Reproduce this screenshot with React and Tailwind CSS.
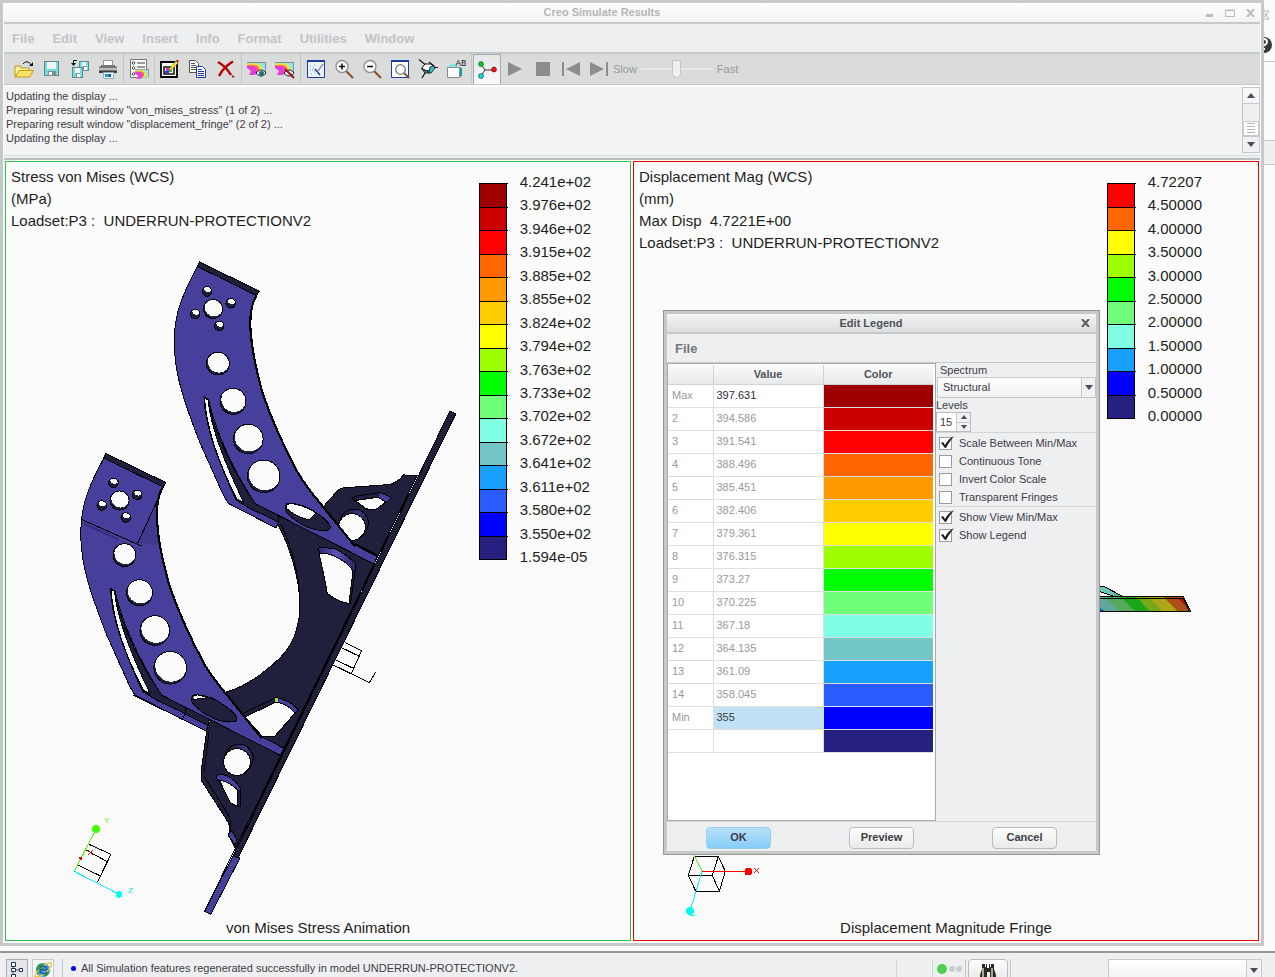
import { useState } from "react";

const STRESS_COLORS = [
  "#9f0000", "#cc0000", "#ff0000", "#ff6600", "#ff9900", "#ffcc00", "#ffff00", "#9fff00",
  "#00ff00", "#70ff78", "#80ffe5", "#73c6c6", "#18a0ff", "#2b5cff", "#0000ff", "#262080",
];

const STRESS_LABELS = [
  "4.241e+02", "3.976e+02", "3.946e+02", "3.915e+02", "3.885e+02", "3.855e+02",
  "3.824e+02", "3.794e+02", "3.763e+02", "3.733e+02", "3.702e+02", "3.672e+02",
  "3.641e+02", "3.611e+02", "3.580e+02", "3.550e+02", "1.594e-05",
];

const DISP_COLORS = [
  "#ff0000", "#ff6600", "#ffff00", "#9fff00", "#00ff00",
  "#70ff78", "#80ffe5", "#18a0ff", "#0000ff", "#262080",
];

const DISP_LABELS = [
  "4.72207", "4.50000", "4.00000", "3.50000", "3.00000", "2.50000",
  "2.00000", "1.50000", "1.00000", "0.50000", "0.00000",
];

const LEVEL_ROWS = [
  ["Max", "397.631"], ["2", "394.586"], ["3", "391.541"], ["4", "388.496"],
  ["5", "385.451"], ["6", "382.406"], ["7", "379.361"], ["8", "376.315"],
  ["9", "373.27"], ["10", "370.225"], ["11", "367.18"], ["12", "364.135"],
  ["13", "361.09"], ["14", "358.045"], ["Min", "355"], ["", ""],
];

const MENUS = ["File", "Edit", "View", "Insert", "Info", "Format", "Utilities", "Window"];

const MESSAGES = [
  "Updating the display ...",
  'Preparing result window "von_mises_stress" (1 of 2) ...',
  'Preparing result window "displacement_fringe" (2 of 2) ...',
  "Updating the display ...",
];

function Icon({ children }) {
  return (
    <svg width="20" height="20" viewBox="0 0 20 20" fill="none" aria-hidden="true">
      {children}
    </svg>
  );
}

function Floppy({ x, y, s }) {
  return (
    <g transform={`translate(${x} ${y})`} shapeRendering="crispEdges">
      <rect width={s} height={s} fill="#5a8a8c" />
      <rect x="1" y="1" width={s - 2} height={s - 2} fill="#6fdfe2" />
      <rect x="3" y="1" width={s - 6} height={s / 2 - 1} fill="#f4f6f6" />
      <rect x="4" y={s - 5} width={s - 7} height="5" fill="#8a8a8a" />
      <rect x="5" y={s - 4} width="3" height="3" fill="#fff" />
    </g>
  );
}

function Rainbow({ x = 0, y = 0 }) {
  return (
    <g transform={`translate(${x} ${y})`}>
      <path d="M0 0h19v10h-4v3H5l3-4-8-4z" fill="#8fe4ff" />
      <path d="M0 1h8c6 0 9 4 8 9l-3 2H5l3-3-8-5z" fill="#b4f07a" />
      <path d="M0 2h8c5 0 7 3 6 7l-2 3H5l3-3-8-5z" fill="#ffe23c" />
      <path d="M0 3h7c4 0 6 2 5 6l-2 3H5l3-3-8-4z" fill="#ff7a50" />
      <path d="M0 4h6c4 1 5 3 4 5l-2 4H2l2-4-4-3z" fill="#e83cd8" />
      <path d="M0 .500h18.500v9.500" stroke="#8a8a8a" shapeRendering="crispEdges" />
    </g>
  );
}

function Magnifier({ children }) {
  return (
    <g>
      <path d="M12 12l7 7" stroke="#8a4a24" strokeWidth="2" />
      <circle cx="8" cy="7.500" r="6" fill="#fff" stroke="#8d8d8d" strokeWidth="1.300" />
      {children}
    </g>
  );
}

const ICONS = {
  Open: (
    <>
      <path d="M1 7h5l1 2h8v4H5l-3 5H1z" fill="#fff3a0" stroke="#b8930c" />
      <path d="M5 11.500h14.500l-4 6.500H1.500z" fill="#fce468" stroke="#c49a12" />
      <path d="M9 5c2-3 6-3 8 1" stroke="#111" />
      <path d="M19 3v4h-4z" fill="#111" />
    </>
  ),
  Save: <Floppy x={2} y={2} s={15} />,
  "Save As": (
    <>
      <Floppy x={9} y={2} s={10} />
      <Floppy x={2} y={8} s={11} />
      <path d="M7 1.500H3.500V5" stroke="#111" />
      <path d="M1 4h5L3.500 7z" fill="#111" />
    </>
  ),
  Print: (
    <g shapeRendering="crispEdges">
      <path d="M5 1h9v7H5z" fill="#fff" stroke="#999" />
      <path d="M1 8l3-2h12l3 2v6H1z" fill="#777" />
      <path d="M1 9h18v2H1z" fill="#b9b9b9" />
      <path d="M1 12h18v2H1z" fill="#3c3c3c" />
      <path d="M5 13h10v6H6z" fill="#fff" stroke="#8ac" />
      <path d="M7 15h4v3H7z" fill="#18a0b8" />
      <path d="M11 15h2v3h-2z" fill="#1e3cc8" />
    </g>
  ),
  Legend: (
    <>
      <path d="M1.500.500h16v18h-16z" fill="#fff" stroke="#777" />
      <path d="M8 4h8M8 8h8M8 12h3" stroke="#333" />
      <circle cx="4.500" cy="4" r="1.300" stroke="#444" />
      <circle cx="4.500" cy="9" r="1.300" stroke="#444" />
      <circle cx="4.500" cy="15" r="1.300" stroke="#444" />
      <g transform="translate(6 10) scale(.75)">
        <Rainbow />
      </g>
    </>
  ),
  Edit: (
    <>
      <path d="M1 3h16v15H1z" fill="#fff" stroke="#000" strokeWidth="1.800" />
      <path d="M4 8h10v7H4z" stroke="#111" strokeWidth="1.500" />
      <path d="M6 9h3v3H6z" fill="#e81ee8" />
      <path d="M9 9h3v4H9z" fill="#24c224" />
      <path d="M5 12h4v2H5z" fill="#183cf0" />
      <path d="M9 10l7-8 2 2-7 7z" fill="#ffe83c" stroke="#8a7a00" strokeWidth=".7" />
      <path d="M16 1.500l1.500-1L19 2l-1 1.500z" fill="#e02020" />
    </>
  ),
  Copy: (
    <>
      <path d="M1.500 1.500h6l3 3v9h-9z" fill="#fff" stroke="#555" />
      <path d="M3 4.500h4M3 6.500h5M3 8.500h5M3 10.500h5" stroke="#555" />
      <path d="M8.500 7.500h6l3 3v8h-9z" fill="#fff" stroke="#1c3c9c" />
      <path d="M10 10.500h4M10 12.500h6M10 14.500h6M10 16.500h6" stroke="#1c3c9c" />
    </>
  ),
  Delete: (
    <>
      <path d="M2 3c5 3 10 8 13 13M17 2.500C11 6 6 11 3 17" stroke="#b40000" strokeWidth="2.400" />
      <path d="M16 17l2 1" stroke="#b40000" strokeWidth="1.500" />
    </>
  ),
  "Show Result": (
    <>
      <Rainbow y={3} />
      <path d="M9 14c3-4 7-4 10 0-3 4-7 4-10 0z" fill="#dfe8e8" stroke="#222" />
      <circle cx="14.500" cy="14.500" r="2.500" fill="#1e7474" />
    </>
  ),
  "Hide Result": (
    <>
      <Rainbow y={3} />
      <path d="M9 14c3-4 7-4 10 0-3 4-7 4-10 0z" fill="#dfe8e8" stroke="#222" />
      <path d="M10 10l9 9" stroke="#a01010" strokeWidth="2" />
    </>
  ),
  Repaint: (
    <>
      <path d="M1.500 1.500h17v17h-17z" fill="#e8f3fb" stroke="#1c3ca0" />
      <path d="M1 1h18v2H1z" fill="#1c3ca0" />
      <path d="M4 7h1M7 9h1M4 11h1M8 13h1M5 15h1M8 6h1M6 11h1" stroke="#58a0d8" />
      <path d="M9 10l5 6" stroke="#1c3c80" strokeWidth="1.400" />
      <path d="M12 12l5-7" stroke="#777" strokeWidth="1.200" />
    </>
  ),
  "Zoom In": (
    <Magnifier>
      <path d="M5 7.500h6M8 4.500v6" stroke="#111" strokeWidth="1.600" />
    </Magnifier>
  ),
  "Zoom Out": (
    <Magnifier>
      <path d="M5 7.500h6" stroke="#111" strokeWidth="1.600" />
    </Magnifier>
  ),
  Refit: (
    <>
      <path d="M1.500 1.500h17v17h-17z" fill="#fff" stroke="#1c3ca0" />
      <path d="M1 1h18v2H1z" fill="#1c3ca0" />
      <path d="M14 14l5 5" stroke="#8a4a24" strokeWidth="2" />
      <circle cx="10.500" cy="10.500" r="4.800" fill="#fff" stroke="#777" strokeWidth="1.300" />
    </>
  ),
  Orient: (
    <>
      <path d="M3.500 9.500L7 5h6l3 3-3 3-4 1z" fill="#fff" stroke="#111" />
      <path d="M3.500 9.500L9 12l3 2H7z" fill="#3c8484" stroke="#111" strokeWidth=".8" />
      <path d="M12 8l4-1.500L17 9l-4 5h-2z" fill="#2ec8d0" stroke="#111" strokeWidth=".8" />
      <path d="M1 .500l6 5M16 8.500h4M7 14l-3 5M11 3l5 4" stroke="#111" strokeWidth="1.200" />
    </>
  ),
  "Saved Views": (
    <>
      <path d="M2 8l3-3h6v3z" fill="#7fe8ec" />
      <path d="M13 8l3 1v8l-2 1h-1z" fill="#12a0a4" />
      <path d="M1.500 8.500h12v10h-12z" fill="#fff" stroke="#8a8a8a" />
      <text x="9.500" y="7" fill="#222" className="font-['Liberation_Mono',monospace] text-[9px]">AB</text>
    </>
  ),
  "Spin Center": (
    <>
      <path d="M4 4l4 6-4 6M8 10h8" stroke="#333" />
      <circle cx="4" cy="4" r="2.500" fill="#12c812" stroke="#064" strokeWidth=".6" />
      <circle cx="4" cy="16" r="2.500" fill="#18d8e0" stroke="#044" strokeWidth=".6" />
      <circle cx="17" cy="9.500" r="2.500" fill="#f01414" stroke="#600" strokeWidth=".6" />
    </>
  ),
  Play: <path d="M3 3l14 7-14 7z" fill="#8d8d8d" />,
  Stop: <path d="M3 3h14v14H3z" fill="#8d8d8d" />,
  "Step Back": <path d="M1 3h2v14H1zM19 3v14L5 10z" fill="#8d8d8d" />,
  "Step Forward": <path d="M17 3h2v14h-2zM1 3v14l14-7z" fill="#8d8d8d" />,
};

const TOOL_GROUPS = [
  ["Open", "Save", "Save As", "Print"],
  ["Legend"],
  ["Edit", "Copy", "Delete"],
  ["Show Result", "Hide Result"],
  ["Repaint", "Zoom In", "Zoom Out", "Refit", "Orient", "Saved Views"],
  ["Spin Center", "Play", "Stop", "Step Back", "Step Forward"],
];

function Toolbar() {
  return (
    <div className="flex h-[33px] items-stretch border-t-2 border-b border-[#c5c9cb] bg-[#dadcdb] pl-1.5">
      {TOOL_GROUPS.map((group, i) => (
        <div key={i} className="flex">
          {i > 0 && <span className="mx-px w-px bg-[#c3c6c8]" />}
          {group.map((name) => (
            <button
              key={name}
              title={name}
              className={
                name === "Spin Center"
                  ? "flex w-7 items-center justify-center border-x border-t border-[#a9acae] bg-gradient-to-b from-[#e4e5e7] to-[#fbfbfb]"
                  : "flex w-7 items-center justify-center"
              }
            >
              <Icon>{ICONS[name]}</Icon>
            </button>
          ))}
        </div>
      ))}
      <label className="flex items-center gap-1 text-[11px] text-[#97999b]">
        Slow
        <input
          type="range"
          defaultValue="49"
          disabled
          className="h-5 w-[72px] appearance-none bg-[linear-gradient(#e6e8e8,#e6e8e8)] bg-[length:100%_2px] bg-center bg-no-repeat [&::-webkit-slider-thumb]:h-[18px] [&::-webkit-slider-thumb]:w-[9px] [&::-webkit-slider-thumb]:appearance-none [&::-webkit-slider-thumb]:rounded-t-sm [&::-webkit-slider-thumb]:rounded-b-full [&::-webkit-slider-thumb]:border [&::-webkit-slider-thumb]:border-[#c3c6c8] [&::-webkit-slider-thumb]:bg-[#eff0f0]"
        />
        Fast
      </label>
    </div>
  );
}

function MessageLog() {
  return (
    <div className="flex h-[70px] border-t-2 border-[#fdfdfd] bg-[#f3f3f3]">
      <div className="flex-1 py-0.5 pl-0.5 text-[11px] leading-[14px] text-[#3c3c46]">
        {MESSAGES.map((m, i) => (
          <p key={i}>{m}</p>
        ))}
      </div>
      <div className="flex h-[66px] w-[18px] flex-col border border-[#c5c9cb] bg-[#eeeff1]">
        <button aria-label="Scroll up" className="flex h-4 items-center justify-center border-b border-[#c5c9cb] bg-[#f6f6f7]">
          <svg width="8" height="5"><path d="M0 5l4-5 4 5z" fill="#4a4a5a" /></svg>
        </button>
        <div className="flex-1" />
        <div className="flex h-[15px] items-center justify-center border border-[#c5c9cb] bg-white">
          <svg width="8" height="11"><path d="M0 .500h8M0 3.500h8M0 6.500h8M0 9.500h8" stroke="#b4b6b8" /></svg>
        </div>
        <button aria-label="Scroll down" className="flex h-4 items-center justify-center border-t border-[#c5c9cb] bg-[#f0f1f2]">
          <svg width="8" height="5"><path d="M0 0l4 5 4-5z" fill="#4a4a5a" /></svg>
        </button>
      </div>
    </div>
  );
}

function Legend({ colors, labels, barClass, labelClass }) {
  return (
    <div className="flex gap-3">
      <div className={`mt-[9px] flex w-[29px] flex-col ${barClass}`}>
        {colors.map((c) => (
          <div key={c} className="flex-1 border-t border-black">
            <div className="h-full w-7 border-x border-black" style={{ backgroundColor: c }} />
          </div>
        ))}
        <div className="h-px w-7 bg-black" />
      </div>
      <div className={`flex flex-col justify-between text-[15px] leading-4 ${labelClass}`}>
        {labels.map((l) => (
          <span key={l}>{l}</span>
        ))}
      </div>
    </div>
  );
}

// [cx, cy, r] of every round hole in one arm
const ARM_HOLES = [
  [207, 291.5, 4.8], [230.7, 303.3, 4.8], [195.3, 314, 4.8], [219.3, 326, 4.8],
  [213, 309, 9.6], [217.9, 363.6, 11.4], [233, 401.3, 13], [248.3, 439, 14.8], [263.7, 476.3, 16.3],
];

function Arm({ id, slotView, pad }) {
  return (
    <g stroke="#000" strokeWidth="1">
      {pad && (
        <>
          <path d="M226.800 503.500L299.500 539.500L302 533L250 507Z" fill="#46409c" />
          <path d="M250 508.500L301.500 534L303 527L255 503Z" fill="#21203c" />
        </>
      )}
      {/* outer flange */}
      <path
        d="M197.700 266C190 280 180 300 176.700 317C173 335 174 352 176 365C178 380 182 392 185 402C190 417 195 430 200 443L223.300 495L228.500 503.500L276 528.500L278.500 522L251 507L210 400Z"
        fill="#46409c"
        stroke="none"
      />
      <path d="M185 402C190 417 195 430 200 443L223.300 495L228.500 503.500L276 528L278.500 522" fill="none" />
      {/* slot and its thickness */}
      <path d="M204 397L208.500 399.500C211 420 225 460 255 503L279 515L278.500 522L250 508.500L236 500C222 470 206 430 204 397Z" fill="#21203c" />
      <path d="M204.500 398L208 400C211 430 226 466 243.500 502L237 499C222 470 207 432 204.500 398Z" fill="#fcfcfc" />
      {/* face */}
      <path
        d="M197.700 266L256.700 295.300C252 302 251 315 250.700 327C252 345 255 360 263.300 393C272 420 284 446 298 473C307 488 315 497 323.300 507L355 545L377.300 556.700L374 564L255 503.500C236 474 217 436 208.500 399.500L204 397L190 400C170 360 171 320 197.700 266Z"
        fill="#46409c"
        stroke="none"
      />
      <path d="M355 545L377.300 556.700L374 564L255 503.500C236 474 217 436 208.500 399.500L204 397C205 430 222 470 237 500L244 504" fill="none" />
      <path d="M197.700 266C190 280 180 300 176.700 317C173 335 174 352 176 365C178 380 182 392 185 402" fill="none" />
      {/* inner edge */}
      <path
        d="M256.700 295.300C252 302 250 313 250.300 327C251.500 350 256 368 262.500 393C272 421 284 447 298 473C307 488 315 497 323.300 507L355 546.500"
        fill="none"
        strokeWidth="2.200"
      />
      <path d="M199.500 262L259.300 291L256.700 295.600L197.300 266.500Z" fill="#21203c" />
      {pad && (
        <g>
          <path d="M253.500 306L231 351L252 354Q249 330 249.500 316Z" fill="#3a3486" stroke="none" opacity=".55" />
          <path d="M175 328L235 354.500M255 300L231 352" fill="none" />
          <path d="M177 332L212 348" stroke="#332e7c" strokeWidth="2" />
        </g>
      )}
      {ARM_HOLES.map(([cx, cy, r], i) => (
        <g key={i}>
          <clipPath id={`${id}-${i}`}>
            <circle cx={cx} cy={cy} r={r} />
          </clipPath>
          <circle cx={cx} cy={cy} r={r} fill="#21203c" />
          <circle
            cx={cx + 1}
            cy={r < 5 ? cy - 3.5 : cy - 2}
            r={r < 5 ? r - 0.5 : r - 0.4}
            fill="#fcfcfc"
            stroke="none"
            clipPath={`url(#${id}-${i})`}
          />
          <circle cx={cx} cy={cy} r={r} fill="none" />
        </g>
      ))}
      {/* oblong hole near the foot */}
      <path d="M285 508C285 504 287 503 291 503.300C300 504 310 508 317 513.300C324 518 329 522 330 526C331 530 328 530.500 322 530.500C312 530 302 525 295 520C289 515 285 512 285 508Z" fill="#21203c" />
      <path d={slotView} fill="#fcfcfc" />
    </g>
  );
}

function StressModel() {
  return (
    <svg
      className="absolute inset-0 h-full w-full"
      viewBox="6 162 624 778"
      preserveAspectRatio="xMinYMin meet"
      shapeRendering="crispEdges"
      aria-hidden="true"
    >
      <defs>
        <linearGradient id="lit" x1="0" x2="1">
          <stop offset="0" stopColor="#2b2766" />
          <stop offset=".5" stopColor="#5a54b8" />
          <stop offset="1" stopColor="#2b2766" />
        </linearGradient>
        <linearGradient id="bore" x1="0" x2="1">
          <stop offset=".3" stopColor="#21203c" />
          <stop offset=".7" stopColor="#3c3688" />
          <stop offset="1" stopColor="#21203c" />
        </linearGradient>
      </defs>
      <g stroke="#000" strokeWidth="1">
        {/* web between the arms */}
        <path
          d="M276 512L323 507L336.700 491.700Q340 488 345 487.700L390 484.500Q400 481 403.500 474.500L407 476L417 475.500L236 850L228.300 835Q231 828 228 822L201 780V772L207.300 727L226.700 691.700C245 687 262 675 280 658C292 645 296 635 299 618C303 590 292 550 278 525Z"
          fill="#21203c"
        />
        <path d="M281 524C294 552 302 585 299 618M204 772L209 732M204 776L229 816Q232 822 230 832" fill="none" />
        {/* cut-outs */}
        <path d="M351.700 497.700L357 496L380 492.500L390.700 497.500L388 501L375 510L366 509.500Z" fill="#21203c" />
        <path d="M380 493L390.500 497.500L386 502L379 497.500Z" fill="#46409c" stroke="none" />
        <path d="M355 500.500L378 497.300L386 502L375 510L366 508.700Z" fill="#fcfcfc" />
        <circle cx="354" cy="523.300" r="14.300" fill="url(#bore)" />
        <circle cx="352" cy="527" r="13.300" fill="#fcfcfc" />
        <path d="M317.700 549L321 547L335 549Q346 554 355 563V572L350.500 603.500L348 603Z" fill="url(#lit)" />
        <path d="M351 571L355 572L350.500 603.500L348 603Z" fill="#21203c" />
        <path d="M319 553Q330 553 338 558Q348 563 353 571L349 603.300Q340 603 327.300 593.300Q325 580 319 553Z" fill="#fcfcfc" />
        <path d="M242 714L276 697.500Q290 700 298.300 709.300L295 713L246.700 718Z" fill="#21203c" />
        <path d="M276 697.500Q290 700 298 709.500L295 713.500Q288 704 276 702Z" fill="#46409c" />
        <path d="M245 717L276 702Q288 704 295 713L275 736H262Z" fill="#fcfcfc" />
        <path d="M275 698h3v4h-3z" fill="#9be04a" stroke="none" />
        <circle cx="239" cy="758.500" r="14.300" fill="url(#bore)" />
        <circle cx="237" cy="762" r="13.300" fill="#fcfcfc" />
        <path d="M216.700 776Q218 773.500 226.700 775.500Q236 780 240 788V806H237L217 779Z" fill="#46409c" />
        <path d="M237 790h3v16h-3z" fill="#21203c" />
        <path d="M219.300 780Q230 782 237.500 790V806.300Q233 805 230 802Z" fill="#fcfcfc" />
        <path d="M229 833L232 831.500L237 840L235.500 845L228.500 836Z" fill="#46409c" />
        {/* long plate seen edge on */}
        <path d="M234 854L240 858L210.700 914.300L204.500 911.500Z" fill="#46409c" />
        <path d="M450 411L455.700 414L238 858L233.500 855.500Z" fill="#21203c" />
        <path d="M417 476L204.500 911.500" fill="none" />
        <path d="M355 544L377 555" fill="none" strokeWidth="2" />
        {/* datum frame behind the plate */}
        <path
          d="M345 642.500L361.700 650.700L351.700 672.700M341.700 647.700L358.700 656M336 660L353.300 668.300M333.300 665L369.300 682.700L375.700 672"
          fill="none"
        />
      </g>
      <Arm id="back" slotView="M286 506Q288 503.500 292 503.500Q306 506 316 513L309 520Q296 517 286 508Z" />
      <g transform="translate(-93.500 191.500)">
        <Arm id="front" pad slotView="M286 505.500Q288 503 292 503.500L302 506Q294 507 287 508Z" />
      </g>
      {/* coordinate triad */}
      <g fill="none" stroke="#000">
        <path d="M88.300 844L111 854.300L97.300 882.300M86 850L107.300 861.700M78.300 865.300L100 875.700M88 845L81 858" />
        <path d="M74.300 871.300L96 829.300" stroke="#48ff00" />
        <path d="M74.300 871.300L119 894.300" stroke="#00ffee" />
        <path d="M88 850l5 5m0-5l-5 5" stroke="#f00000" />
        <circle cx="96" cy="829" r="4" fill="#48ff00" stroke="none" />
        <circle cx="119" cy="894.300" r="3.300" fill="#00ffee" stroke="none" />
        <circle cx="80.700" cy="858.300" r="1.500" fill="#f00000" stroke="none" />
      </g>
      <text x="104" y="823" className="fill-[#48ff00] text-[8px]">Y</text>
      <text x="128" y="893" className="fill-[#00e8e0] text-[8px]">Z</text>
    </svg>
  );
}

function DisplacementModel() {
  return (
    <svg
      className="absolute inset-0 h-full w-full"
      viewBox="634 162 624 778"
      preserveAspectRatio="xMinYMin meet"
      shapeRendering="crispEdges"
      aria-hidden="true"
    >
      <path d="M1090 586H1103L1123 596.500H1114L1090 588Z" fill="#6cc8b8" stroke="#000" />
      <path d="M1114 593l8 4h-8z" fill="#58b860" />
      <path d="M1090 597H1107L1119 611H1090Z" fill="#62a89a" />
      <path d="M1098 606l7 5h-7z" fill="#1868b8" />
      <path d="M1104 597H1121L1135 611H1119Z" fill="#58a860" />
      <path d="M1120 597H1138L1149 611H1134Z" fill="#18a818" />
      <path d="M1137 597H1155L1163 611H1149Z" fill="#78a818" />
      <path d="M1149 597H1164L1178 611H1162Z" fill="#aca818" />
      <path d="M1163 597H1183L1190 611H1178Z" fill="#ac5018" />
      <path d="M1177 598H1183L1189 609Z" fill="#b01414" />
      <path d="M1090 596.500H1183L1190.500 611H1090M1090 598.500H1183.500L1189 611" fill="none" stroke="#000" />
      <g fill="none" stroke="#000">
        <path d="M694.300 856.500H718.300L725.300 871.300L719.300 891.500H696L688.300 875.500ZM688.300 875.500H712.300L718.300 856.500M712.300 875.500L719.300 891" />
        <path d="M702 871.300L694 855" stroke="#48ff00" />
        <path d="M702 871.500H748" stroke="#f00000" />
        <path d="M702 871.300L690 911" stroke="#00ffee" />
        <circle cx="748.500" cy="871.500" r="4" fill="#ff0000" stroke="none" />
        <circle cx="690" cy="911" r="4.300" fill="#00ffee" stroke="none" />
        <path d="M690 915.500h5" stroke="#00ffee" />
        <path d="M754 868l5 5m0-5l-5 5" stroke="#f00000" />
      </g>
    </svg>
  );
}

function CheckOption({ label, defaultChecked }) {
  return (
    <label className="flex h-[18px] items-center gap-[7px] pl-[3px]">
      <span className="relative flex">
        <input
          type="checkbox"
          defaultChecked={defaultChecked}
          className="peer h-[13px] w-[13px] appearance-none border border-[#989ca0] bg-white"
        />
        <svg className="pointer-events-none absolute -top-px left-0 hidden peer-checked:block" width="16" height="14">
          <path d="M2 7l2-1 2 3c2-4 5-7 9-9-3 4-6 8-8 12H6z" fill="#1e1e22" />
        </svg>
      </span>
      {label}
    </label>
  );
}

function DialogButton({ children, primary }) {
  return (
    <button
      className={
        primary
          ? "h-[22px] w-[65px] rounded-sm border border-[#9fcdea] bg-gradient-to-b from-[#b8e0fa] to-[#84cdf8] text-[11px] font-bold text-[#3c3c46]"
          : "h-[22px] w-[65px] rounded-sm border border-[#b9bcbf] bg-gradient-to-b from-[#fdfdfd] to-[#e9eaeb] text-[11px] font-bold text-[#3c3c46]"
      }
    >
      {children}
    </button>
  );
}

function EditLegendDialog() {
  const [levels, setLevels] = useState(15);

  return (
    <div role="dialog" aria-label="Edit Legend" className="absolute top-[148px] left-[29px] w-[437px] border border-[#979797] bg-[#c5c9cb] p-[3px] text-[11px] text-[#3c3c46]">
      <div className="flex h-[18px] items-center bg-gradient-to-b from-[#f3f4f4] to-[#dcdedf] font-bold text-[#505258]">
        <h2 className="flex-1 text-center">Edit Legend</h2>
        <button aria-label="Close" className="flex w-[21px] justify-center">
          <svg width="9" height="8"><path d="M1 0l7 8M8 0L1 8" stroke="#5c5e60" strokeWidth="2" /></svg>
        </button>
      </div>
      <div className="mt-0.5 flex h-7 items-center bg-[#eeeff1] pt-px pl-2">
        <button className="text-[13px] font-bold text-[#75777b]">File</button>
      </div>
      <div className="mt-px flex h-[458px] bg-[#eeeff1]">
        <div className="w-[269px] border border-[#a7aaac] bg-white pt-px">
          <table className="w-[265px] table-fixed border-collapse">
            <thead>
              <tr className="h-[19px] bg-gradient-to-b from-[#fafafa] to-[#e8e9ea] text-[#505258]">
                <th className="w-[45px] border-r border-b border-[#d0d3d5] p-0" />
                <th className="w-[110px] border-r border-b border-[#d0d3d5] p-0">Value</th>
                <th className="border-b border-[#d0d3d5] p-0">Color</th>
              </tr>
            </thead>
            <tbody>
              {LEVEL_ROWS.map(([level, value], i) => (
                <tr key={i} className="h-[23px] border-b border-[#dddfe0] text-[#97999b]">
                  <td className="border-r border-[#dddfe0] p-0 pl-1">{level}</td>
                  <td
                    className={
                      level === "Min"
                        ? "border-r border-[#dddfe0] bg-[#c1e2f4] p-0 pl-[3px] text-[#3c3c46]"
                        : level === "Max"
                          ? "border-r border-[#dddfe0] p-0 pl-[3px] text-[#2c2c34]"
                          : "border-r border-[#dddfe0] p-0 pl-[3px]"
                    }
                  >
                    {value}
                  </td>
                  <td className="p-0" style={{ backgroundColor: STRESS_COLORS[i] }} />
                </tr>
              ))}
            </tbody>
          </table>
        </div>
        <div className="flex-1">
          <label htmlFor="spectrum" className="block pl-1 leading-[14px]">Spectrum</label>
          <div className="relative ml-px">
            <select
              id="spectrum"
              className="block h-[21px] w-full appearance-none border border-[#c5c9cb] bg-gradient-to-b from-white to-[#f0f1f1] pl-[5px]"
            >
              <option>Structural</option>
            </select>
            <span className="pointer-events-none absolute inset-y-0 right-0 flex w-[15px] items-center justify-center border border-[#c5c9cb] bg-[#f0f1f2]">
              <svg width="8" height="5"><path d="M0 0l4 5 4-5z" fill="#4a4a5a" /></svg>
            </span>
          </div>
          <label htmlFor="levels" className="block leading-[14px]">Levels</label>
          <div className="flex h-5 w-[35px] border border-[#b9bcbf] bg-white">
            <input
              id="levels"
              type="text"
              value={levels}
              onChange={(e) => setLevels(e.target.value)}
              className="w-[19px] pl-[3px] outline-none"
            />
            <span className="flex flex-1 flex-col border-l border-[#c5c9cb] bg-[#f0f1f2]">
              <button aria-label="More levels" onClick={() => setLevels(Number(levels) + 1)} className="flex flex-1 items-center justify-center border-b border-[#c5c9cb]">
                <svg width="6" height="4"><path d="M0 4l3-4 3 4z" fill="#4a4a5a" /></svg>
              </button>
              <button aria-label="Fewer levels" onClick={() => setLevels(Number(levels) - 1)} className="flex flex-1 items-center justify-center">
                <svg width="6" height="4"><path d="M0 0l3 4 3-4z" fill="#4a4a5a" /></svg>
              </button>
            </span>
          </div>
          <div className="border-t border-[#d3d6d8] pt-px">
            <CheckOption label="Scale Between Min/Max" defaultChecked />
            <CheckOption label="Continuous Tone" />
            <CheckOption label="Invert Color Scale" />
            <CheckOption label="Transparent Fringes" />
          </div>
          <div className="border-t border-[#d3d6d8] pt-px">
            <CheckOption label="Show View Min/Max" defaultChecked />
            <CheckOption label="Show Legend" defaultChecked />
          </div>
        </div>
      </div>
      <div className="grid h-[30px] grid-cols-3 items-center justify-items-center border-t border-[#d3d6d8] bg-[#eeeff1] pt-0.5">
        <DialogButton primary>OK</DialogButton>
        <DialogButton>Preview</DialogButton>
        <DialogButton>Cancel</DialogButton>
      </div>
    </div>
  );
}

function ResultsWindow() {
  return (
    <main className="flex min-w-0 flex-1 flex-col border-[3px] border-[#c5c9cb] bg-[#fbfbfb] px-px">
      <header className="flex h-[19px] items-center bg-gradient-to-b from-white to-[#f3f3f3]">
        <h1 className="flex-1 text-center text-[11px] font-bold text-[#b4b6b8]">Creo Simulate Results</h1>
        <div className="flex w-[60px] items-center justify-around">
          <button aria-label="Minimize"><svg width="8" height="8"><path d="M0 5h7v3H0z" fill="#b9bbbd" /></svg></button>
          <button aria-label="Maximize"><svg width="10" height="8"><path d="M.500 1h9v6.500h-9zM0 1.500h10" fill="none" stroke="#b9bbbd" /></svg></button>
          <button aria-label="Close"><svg width="9" height="8"><path d="M1 0l7 8M8 0L1 8" stroke="#b9bbbd" strokeWidth="2" /></svg></button>
        </div>
      </header>
      <nav className="flex h-[30px] items-center gap-[18px] border-t-2 border-[#c5c9cb] bg-[#eeeff1] px-2 pt-px text-[13px] font-bold text-[#c3c4c6]">
        {MENUS.map((m) => (
          <button key={m}>{m}</button>
        ))}
      </nav>
      <Toolbar />
      <MessageLog />
      <div className="mb-px h-[5px] border-t border-b-2 border-t-[#d5e2e4] border-b-[#b9bdbf] bg-[#eeeff1]" />
      <div className="flex min-h-0 flex-1 gap-0.5 px-px pb-0.5 text-[15px] text-[#1e1e22]">
        <section className="relative flex flex-1 flex-col justify-between border border-[#2fc24a]">
          <StressModel />
          <div className="relative flex justify-between pt-1 pr-[39px] pl-[5px]">
            <div className="leading-[22px] whitespace-pre">
              <p>Stress von Mises (WCS)</p>
              <p>(MPa)</p>
              <p>{"Loadset:P3 :  UNDERRUN-PROTECTIONV2"}</p>
            </div>
            <div className="pt-2">
              <Legend colors={STRESS_COLORS} labels={STRESS_LABELS} barClass="h-[377px]" labelClass="h-[391px]" />
            </div>
          </div>
          <p className="relative pb-px text-center">von Mises Stress Animation</p>
        </section>
        <section className="relative flex flex-1 flex-col justify-between border border-[#f00000]">
          <DisplacementModel />
          <div className="relative flex justify-between pt-1 pr-[56px] pl-[5px]">
            <div className="leading-[22px] whitespace-pre">
              <p>Displacement Mag (WCS)</p>
              <p>(mm)</p>
              <p>{"Max Disp  4.7221E+00"}</p>
              <p>{"Loadset:P3 :  UNDERRUN-PROTECTIONV2"}</p>
            </div>
            <div className="pt-2">
              <Legend colors={DISP_COLORS} labels={DISP_LABELS} barClass="h-[236px]" labelClass="h-[250px]" />
            </div>
          </div>
          <p className="relative pb-px text-center">Displacement Magnitude Fringe</p>
          <EditLegendDialog />
        </section>
      </div>
    </main>
  );
}

// sliver of the parent application to the right of the results window
function ParentEdge() {
  return (
    <aside className="flex w-[11px] flex-col overflow-hidden bg-[#fbfbfb]">
      <svg width="11" height="61" aria-hidden="true">
        <path d="M0 11h5l-3 4 3 4H0M0 13l2 2-2 2" fill="none" stroke="#b4b6b8" />
        <circle cx="0" cy="45" r="8" fill="#38383c" />
        <path d="M-3 42c0-4 6-4 6 0 0 2-2 2-3 4M0 48v2" fill="none" stroke="#fff" strokeWidth="2" />
      </svg>
      <div className="h-20 border-y border-[#c5c9cb]" />
      <div className="h-6 border-b border-[#c5c9cb] bg-[#eeeff1]" />
    </aside>
  );
}

function StatusBar() {
  return (
    <footer className="mt-[5px] flex h-[26px] items-start overflow-hidden border-t-2 border-[#979797] bg-[#eeeff1] pt-1.5 text-[11px] text-[#3c3c46]">
      <button aria-label="Model tree" className="ml-1.5 flex h-[22px] w-[22px] shrink-0 items-center justify-center border border-[#a9acae] bg-[#e4e5e7]">
        <svg width="14" height="18" fill="#fff" stroke="#1c2c5c">
          <path d="M3 3v13M3 9h8" stroke="#555" />
          <path d="M1.500 1.500h4v4h-4zM1.500 7.500h4v3h-4zM9.500 7.500h3v3h-3zM1.500 13.500h4v3h-4z" />
        </svg>
      </button>
      <button aria-label="Web browser" className="ml-1 flex h-[22px] w-[22px] shrink-0 items-center justify-center border border-[#c5c9cb] bg-[#f6f6f7]">
        <svg width="18" height="18">
          <circle cx="9" cy="9" r="7" fill="#38a8e8" />
          <path d="M5 3c4-1 6 1 5 4s-5 3-6 7C1 11 2 5 5 3zM12 9c3-1 4 0 3 3s-4 4-5 3z" fill="#2c9c3c" />
          <path d="M1 16C0 12 14 0 17 2s-8 15-16 14z" fill="none" stroke="#e8c83c" strokeWidth="1.500" />
          <path d="M6 9h7M6 9c0-5 7-5 7 0M6 9c0 4 5 5 7 2" fill="none" stroke="#1c5cb8" strokeWidth="1.500" />
        </svg>
      </button>
      <span className="ml-2 h-5 w-px bg-[#c5c9cb]" />
      <p className="flex flex-1 items-center gap-[5px] pt-px pl-2">
        <span className="h-[5px] w-[5px] rounded-full bg-[#0000ff]" />
        All Simulation features regenerated successfully in model UNDERRUN-PROTECTIONV2.
      </p>
      <span className="h-5 w-px bg-[#d3d6d8]" />
      <span className="ml-[35px] h-5 w-px bg-[#d3d6d8]" />
      <svg className="w-8" height="20">
        <circle cx="9" cy="10" r="5" fill="#4bd04b" />
        <circle cx="19" cy="10" r="3" fill="#cccdce" />
        <circle cx="26" cy="10" r="3" fill="#cccdce" />
      </svg>
      <span className="h-5 w-px bg-[#c5c9cb]" />
      <button aria-label="Find" className="mx-0.5 flex h-[22px] w-10 items-start justify-center rounded-sm border border-[#b9bcbf] bg-gradient-to-b from-[#fdfdfd] to-[#e9eaeb] pt-[3px]">
        <svg width="18" height="18">
          <path d="M3 1h3v3h1V1h1v4h2V1h1v3h1V1h3v5l2 6v6h-6V9H8v9H1v-6l2-6z" fill="#2c2a24" />
          <path d="M4 5v10M13 5v10" stroke="#d8d0b4" strokeWidth="1.500" />
        </svg>
      </button>
      <span className="h-5 w-px bg-[#c5c9cb]" />
      <select aria-label="Selection filter" className="mr-0 ml-[97px] h-[22px] w-[139px] appearance-none border border-[#c5c9cb] bg-gradient-to-b from-white to-[#f0f1f1]" />
      <span className="mr-[13px] flex h-[22px] w-[15px] items-center justify-center border border-l-0 border-[#c5c9cb] bg-[#f0f1f2]">
        <svg width="8" height="5"><path d="M0 0l4 5 4-5z" fill="#4a4a5a" /></svg>
      </span>
    </footer>
  );
}

export default function App() {
  return (
    <div className="flex h-screen flex-col overflow-hidden bg-[#fbfbfb] font-['Liberation_Sans',Arial,sans-serif]">
      <div className="flex min-h-0 flex-1">
        <ResultsWindow />
        <ParentEdge />
      </div>
      <StatusBar />
    </div>
  );
}
